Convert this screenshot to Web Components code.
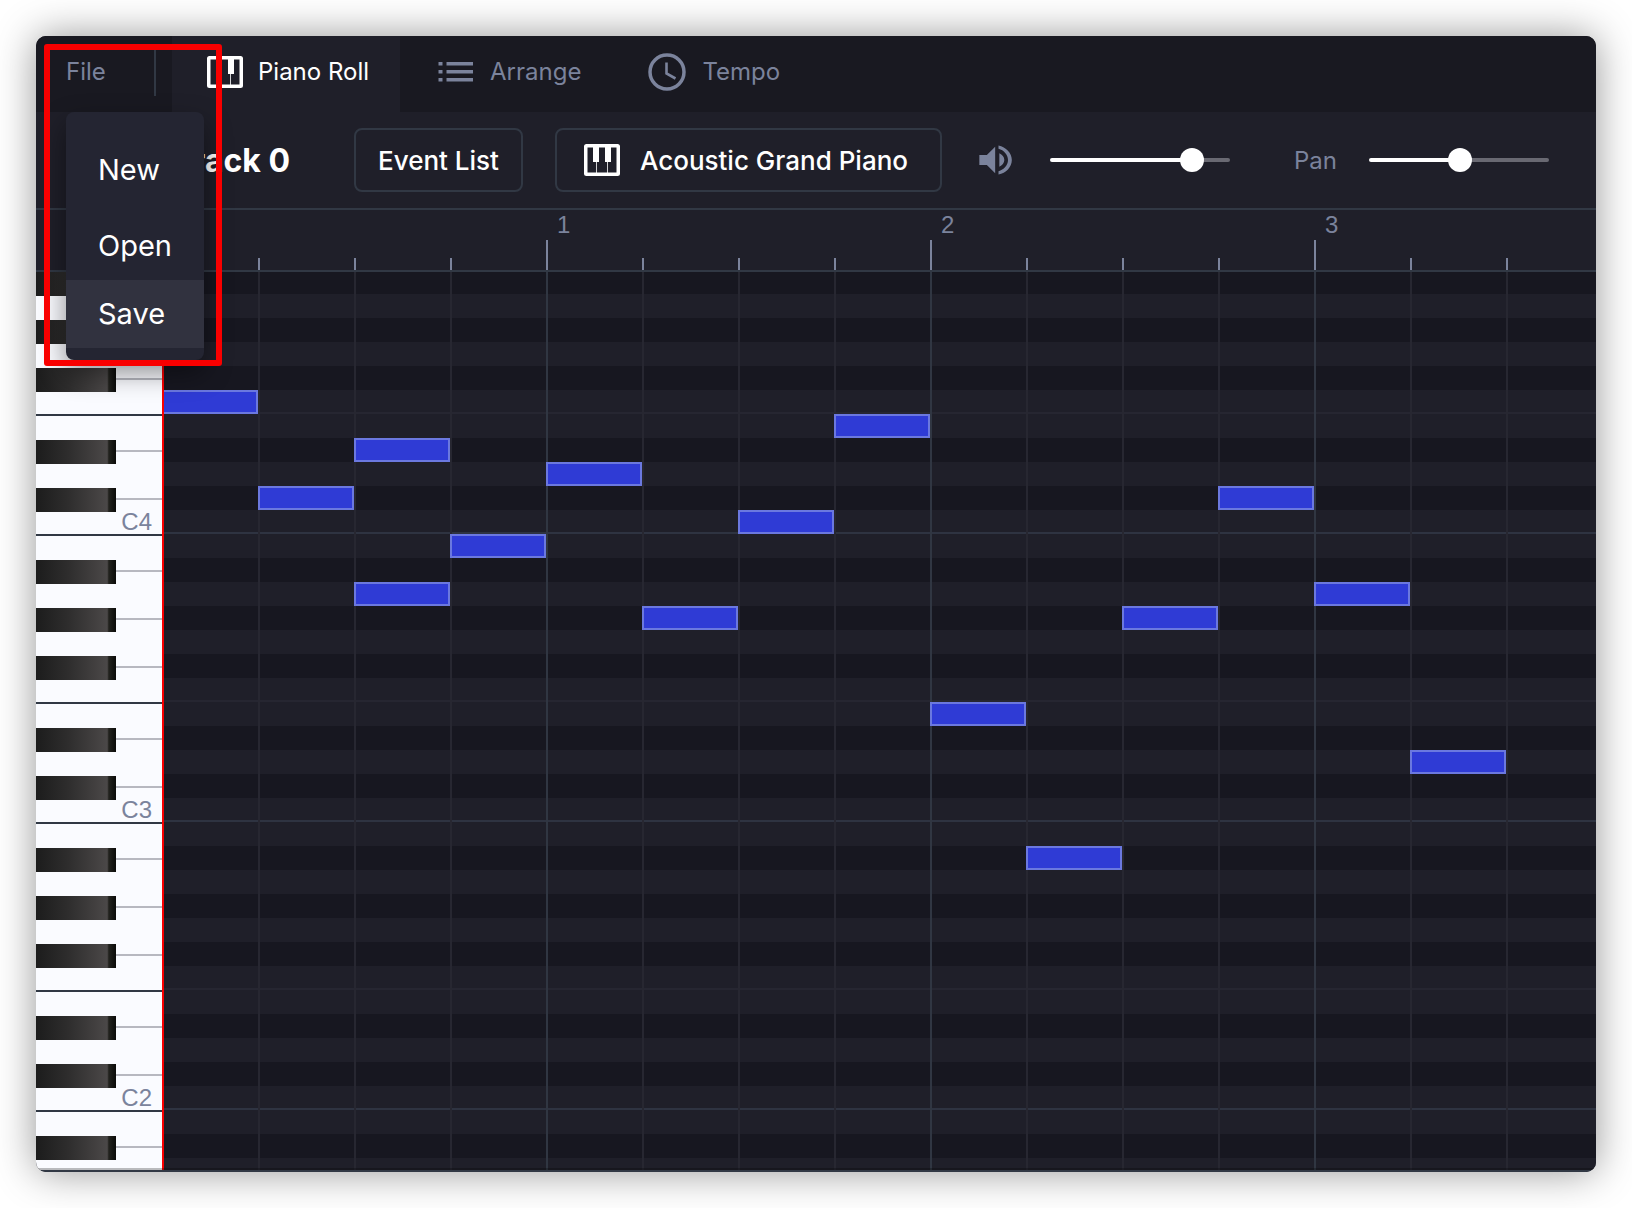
<!DOCTYPE html>
<html lang="en">
<head>
<meta charset="utf-8">
<title>Piano Roll</title>
<style>
  :root {
    --header: #191921;
    --surface: #1f1f29;
    --lane-dark: #171720;
    --popup: #242532;
    --divider: #313844;
    --muted: #7b839c;
    --text: #ffffff;
    --note: #2f3bd5;
    --note-edge: #6b78df;
    --beat: 96px;
    --key: 24px;
  }
  body { margin: 0; background: #fff; font-family: Inter, "Liberation Sans", sans-serif; font-size: 24px; color: var(--text); }
</style>
</head>
<body>
<sequencer-app></sequencer-app>
<script>
const define = (name, html, setup) => {
  const template = document.createElement('template');
  template.innerHTML = html;
  customElements.define(name, class extends HTMLElement {
    connectedCallback() {
      if (this.shadowRoot) return;
      const root = this.attachShadow({ mode: 'open' });
      root.append(template.content.cloneNode(true));
      if (setup) setup(this, root);
    }
  });
};

const ICONS = {
  piano: '<svg width="36" height="32" viewBox="0 0 36 32"><path fill="currentColor" fill-rule="evenodd" d="M2.500 0h31a2.500 2.500 0 0 1 2.500 2.500v27a2.500 2.500 0 0 1-2.500 2.500h-31A2.500 2.500 0 0 1 0 29.500v-27A2.500 2.500 0 0 1 2.500 0ZM3.500 3.500v25H12V18H9V3.500ZM15 3.500V18H12.800v10.500h10.400V18H21V3.500ZM27 3.500V18H24v10.500h8.500v-25Z"/></svg>',
  list: '<svg width="40" height="40" viewBox="0 0 40 40" fill="currentColor"><path d="M3.500 10h4v3.500h-4zM3.500 18h4v3.500h-4zM3.500 26h4v3.500h-4zM11.500 10H38v3.500H11.500zM11.500 18H38v3.500H11.500zM11.500 26H38v3.500H11.500z"/></svg>',
  clock: '<svg width="40" height="40" viewBox="0 0 40 40" fill="none" stroke="currentColor"><circle cx="20" cy="20" r="17" stroke-width="3.500"/><path stroke-width="2.600" d="M19.500 10.500v11l9 5"/></svg>',
  speaker: '<svg width="40" height="40" viewBox="0 0 24 24" fill="currentColor"><path d="M2 9v6h4.500l5 5V4l-5 5H2zm15 3c0-1.770-1.300-3.290-3-4v8c1.700-.710 3-2.230 3-4zM13.500 3.230v2.060c3.200.860 5.700 3.540 5.700 6.710s-2.500 5.850-5.700 6.710v2.060c4.500-.910 8-4.490 8-8.770s-3.500-7.860-8-8.770z"/></svg>'
};

define('app-icon', `
  <style>:host { display: inline-flex; flex: none; } svg { display: block; }</style>
`, (el, root) => root.append(document.createRange().createContextualFragment(ICONS[el.getAttribute('name')])));

define('nav-tab', `
  <style>
    :host { display: flex; }
    button { display: flex; align-items: center; gap: 15px; padding: 0 31px 5px 35px; border: 0; background: none; color: var(--muted); font: inherit; line-height: 32px; white-space: nowrap; }
    :host([active]) button { background: var(--surface); color: var(--text); }
  </style>
  <button type="button"><slot name="icon"></slot><slot></slot></button>
`);

define('menu-item', `
  <style>
    :host { display: block; }
    button { width: 100%; padding: 16px 32px; border: 0; background: none; color: var(--text); font: inherit; font-size: 29px; line-height: 36px; text-align: left; }
    :host([selected]) button { background: #31323f; }
  </style>
  <button type="button" role="menuitem"><slot></slot></button>
`);

define('file-menu', `
  <style>
    :host { position: relative; display: flex; align-items: flex-start; width: 90px; padding: 8px 0 0 30px; }
    .trigger { flex: 1; height: 52px; padding: 2px 0 0; border: 0; border-right: 2px solid var(--divider); background: none; color: var(--muted); font: inherit; text-align: left; }
    .menu { position: absolute; z-index: 2; left: 30px; top: 76px; box-sizing: border-box; width: 138px; padding: 24px 0 12px; border-radius: 8px; background: var(--popup); box-shadow: 0 12px 28px rgba(0, 0, 0, .45); }
    .first { margin-bottom: 8px; }
    .highlight { position: absolute; z-index: 3; left: 8px; top: 8px; box-sizing: border-box; width: 178px; height: 322px; border: 6px solid #f90000; border-radius: 3px; pointer-events: none; }
  </style>
  <button class="trigger" type="button" aria-haspopup="menu" aria-expanded="true">File</button>
  <div class="menu" role="menu">
    <menu-item class="first">New</menu-item>
    <menu-item>Open</menu-item>
    <menu-item selected>Save</menu-item>
  </div>
  <div class="highlight"></div>
`);

define('nav-bar', `
  <style>
    :host { display: flex; height: 76px; background: var(--header); }
    file-menu { margin-right: 16px; }
  </style>
  <file-menu></file-menu>
  <nav-tab active><app-icon slot="icon" name="piano"></app-icon>Piano Roll</nav-tab>
  <nav-tab><app-icon slot="icon" name="list"></app-icon>Arrange</nav-tab>
  <nav-tab><app-icon slot="icon" name="clock"></app-icon>Tempo</nav-tab>
`);

define('tool-button', `
  <style>
    :host { display: flex; flex: none; }
    button { display: flex; align-items: center; gap: 20px; height: 64px; padding: 0 22px; border: 2px solid var(--divider); border-radius: 8px; background: none; color: var(--text); font: inherit; font-size: 26px; font-weight: 500; white-space: nowrap; }
    :host([wide]) button { padding: 0 32px 0 27px; }
  </style>
  <button type="button"><slot name="icon"></slot><slot></slot></button>
`);

define('level-slider', `
  <style>
    :host { display: grid; flex: none; align-items: center; width: 180px; }
    .track, input { grid-area: 1 / 1; }
    .track { height: 4px; border-radius: 2px; background: linear-gradient(90deg, #fff var(--fill), #696972 var(--fill)); }
    input { appearance: none; width: 204px; height: 24px; margin: 0 -12px; background: none; }
    input::-webkit-slider-thumb { appearance: none; width: 24px; height: 24px; border-radius: 50%; background: #fff; }
  </style>
  <div class="track"></div>
  <input type="range" min="0" max="127">
`, (el, root) => {
  const input = root.querySelector('input');
  input.value = el.getAttribute('value');
  input.setAttribute('aria-label', el.getAttribute('label'));
  const sync = () => el.style.setProperty('--fill', input.value / 127 * 100 + '%');
  input.addEventListener('input', sync);
  sync();
});

define('track-toolbar', `
  <style>
    :host { display: flex; align-items: center; height: 96px; border-bottom: 2px solid var(--divider); background: var(--surface); }
    h1 { flex: none; box-sizing: border-box; width: 318px; margin: 0; padding: 2px 64px 0 0; font-size: 32px; line-height: 40px; font-weight: 700; text-align: right; white-space: nowrap; }
    tool-button + tool-button { margin-left: 32px; }
    app-icon.volume { margin: 0 34px; color: var(--muted); }
    .pan { margin: 0 32px 0 64px; color: var(--muted); }
  </style>
  <h1>Track 0</h1>
  <tool-button>Event List</tool-button>
  <tool-button wide><app-icon slot="icon" name="piano"></app-icon>Acoustic Grand Piano</tool-button>
  <app-icon class="volume" name="speaker"></app-icon>
  <level-slider value="100" label="Volume"></level-slider>
  <span class="pan">Pan</span>
  <level-slider value="64" label="Pan"></level-slider>
`);

const BARS = Math.ceil((innerWidth - 198) / 384);

define('measure-ruler', `
  <style>
    :host { display: flex; overflow: hidden; height: 60px; padding-left: 126px; border-bottom: 2px solid var(--divider); background: var(--surface); }
    .bar { flex: none; box-sizing: border-box; width: calc(var(--beat) * 4); padding-left: 11px; color: var(--muted); font-family: "Liberation Sans", sans-serif; line-height: 30px;
      background: linear-gradient(var(--muted), var(--muted)) 0 100% / 2px 30px no-repeat,
        repeating-linear-gradient(90deg, var(--muted) 0 2px, transparent 2px var(--beat)) 0 100% / 100% 12px no-repeat; }
  </style>
`, (el, root) => {
  for (let n = 0; n < BARS; n++) {
    const bar = document.createElement('div');
    bar.className = 'bar';
    if (n) bar.textContent = n;
    root.append(bar);
  }
});

const TOP_NOTE = 70;
const ROWS = Math.ceil((innerHeight - 308) / 24);
const pitches = Array.from({ length: ROWS }, (_, i) => TOP_NOTE - i).filter(p => p >= 0);
const isBlack = p => [1, 3, 6, 8, 10].includes(p % 12);

define('piano-keys', `
  <style>
    :host { display: block; flex: none; width: 126px; background: #fafbff; }
    .key { display: flex; box-sizing: border-box; height: var(--key); }
    .edge { border-bottom: 2px solid var(--divider); }
    .label { justify-content: flex-end; padding-right: 10px; color: var(--muted); font-family: "Liberation Sans", sans-serif; line-height: 20px; }
    .black::before { content: ""; width: 80px; background: linear-gradient(90deg, #1c1c1c, #2e2d2d 40%, #4b4848 89%, #22221e 91%, #0b0b09); }
    .black::after { content: ""; flex: 1; height: 2px; margin-top: 10px; background: #b7b8c0; }
  </style>
`, (el, root) => {
  for (const p of pitches) {
    const key = document.createElement('div');
    key.className = 'key' + (isBlack(p) ? ' black' : '') + (p % 12 === 0 || p % 12 === 5 ? ' edge' : '');
    if (p % 12 === 0) { key.className += ' label'; key.textContent = 'C' + (p / 12 - 1); }
    root.append(key);
  }
});

const NOTES = [[0, 65], [1, 61], [2, 63], [2, 57], [3, 59], [4, 62], [5, 56], [6, 60], [7, 64], [8, 52], [9, 46], [10, 56], [11, 61], [12, 57], [13, 50]];

define('note-lanes', `
  <style>
    :host { display: block; flex: 1; position: relative; overflow: hidden; }
    .canvas { display: grid; margin-top: -2px; }
    .lanes, .beats, .notes { grid-area: 1 / 1; }
    .lane { box-sizing: border-box; height: var(--key); background: var(--surface); }
    .black { background: var(--lane-dark); }
    .f { border-bottom: 2px solid #262631; }
    .c { border-bottom: 2px solid #2e3341; }
    .beats { background:
        repeating-linear-gradient(90deg, #303642 0 2px, transparent 2px calc(var(--beat) * 4)),
        repeating-linear-gradient(90deg, #272731 0 2px, transparent 2px var(--beat)); }
    .notes { display: grid; grid-auto-columns: var(--beat); grid-auto-rows: var(--key); }
    .note { border: 2px solid var(--note-edge); background: var(--note); }
    .playhead { position: absolute; left: 0; top: 0; bottom: 0; width: 2px; background: #f90000; }
  </style>
  <div class="canvas"><div class="lanes"></div><div class="beats"></div><div class="notes"></div></div>
  <div class="playhead"></div>
`, (el, root) => {
  for (const p of pitches) {
    const lane = document.createElement('div');
    lane.className = 'lane' + (isBlack(p) ? ' black' : p % 12 === 0 ? ' c' : p % 12 === 5 ? ' f' : '');
    root.querySelector('.lanes').append(lane);
  }
  for (const [beat, pitch] of NOTES) {
    const note = document.createElement('div');
    note.className = 'note';
    note.style.gridArea = `${TOP_NOTE - pitch + 1} / ${beat + 1}`;
    root.querySelector('.notes').append(note);
  }
});

define('piano-roll', `
  <style>
    :host { position: relative; display: flex; flex: 1; min-height: 0; overflow: hidden; border-bottom: 2px solid var(--divider); }
    .shade { position: absolute; left: 0; right: 0; bottom: 0; height: 2px; background: rgba(0, 0, 0, .26); }
  </style>
  <piano-keys></piano-keys><note-lanes></note-lanes><div class="shade"></div>
`);

define('sequencer-app', `
  <style>
    :host { display: flex; box-sizing: border-box; height: 100vh; padding: 36px; overflow: hidden; }
    main { display: flex; flex: 1; flex-direction: column; min-width: 0; overflow: hidden; border-radius: 10px; background: var(--header); box-shadow: 0 0 40px rgba(0, 0, 0, .42); }
    nav-bar { position: relative; z-index: 1; }
  </style>
  <main>
    <nav-bar></nav-bar>
    <track-toolbar></track-toolbar>
    <measure-ruler></measure-ruler>
    <piano-roll></piano-roll>
  </main>
`);
</script>
</body>
</html>
